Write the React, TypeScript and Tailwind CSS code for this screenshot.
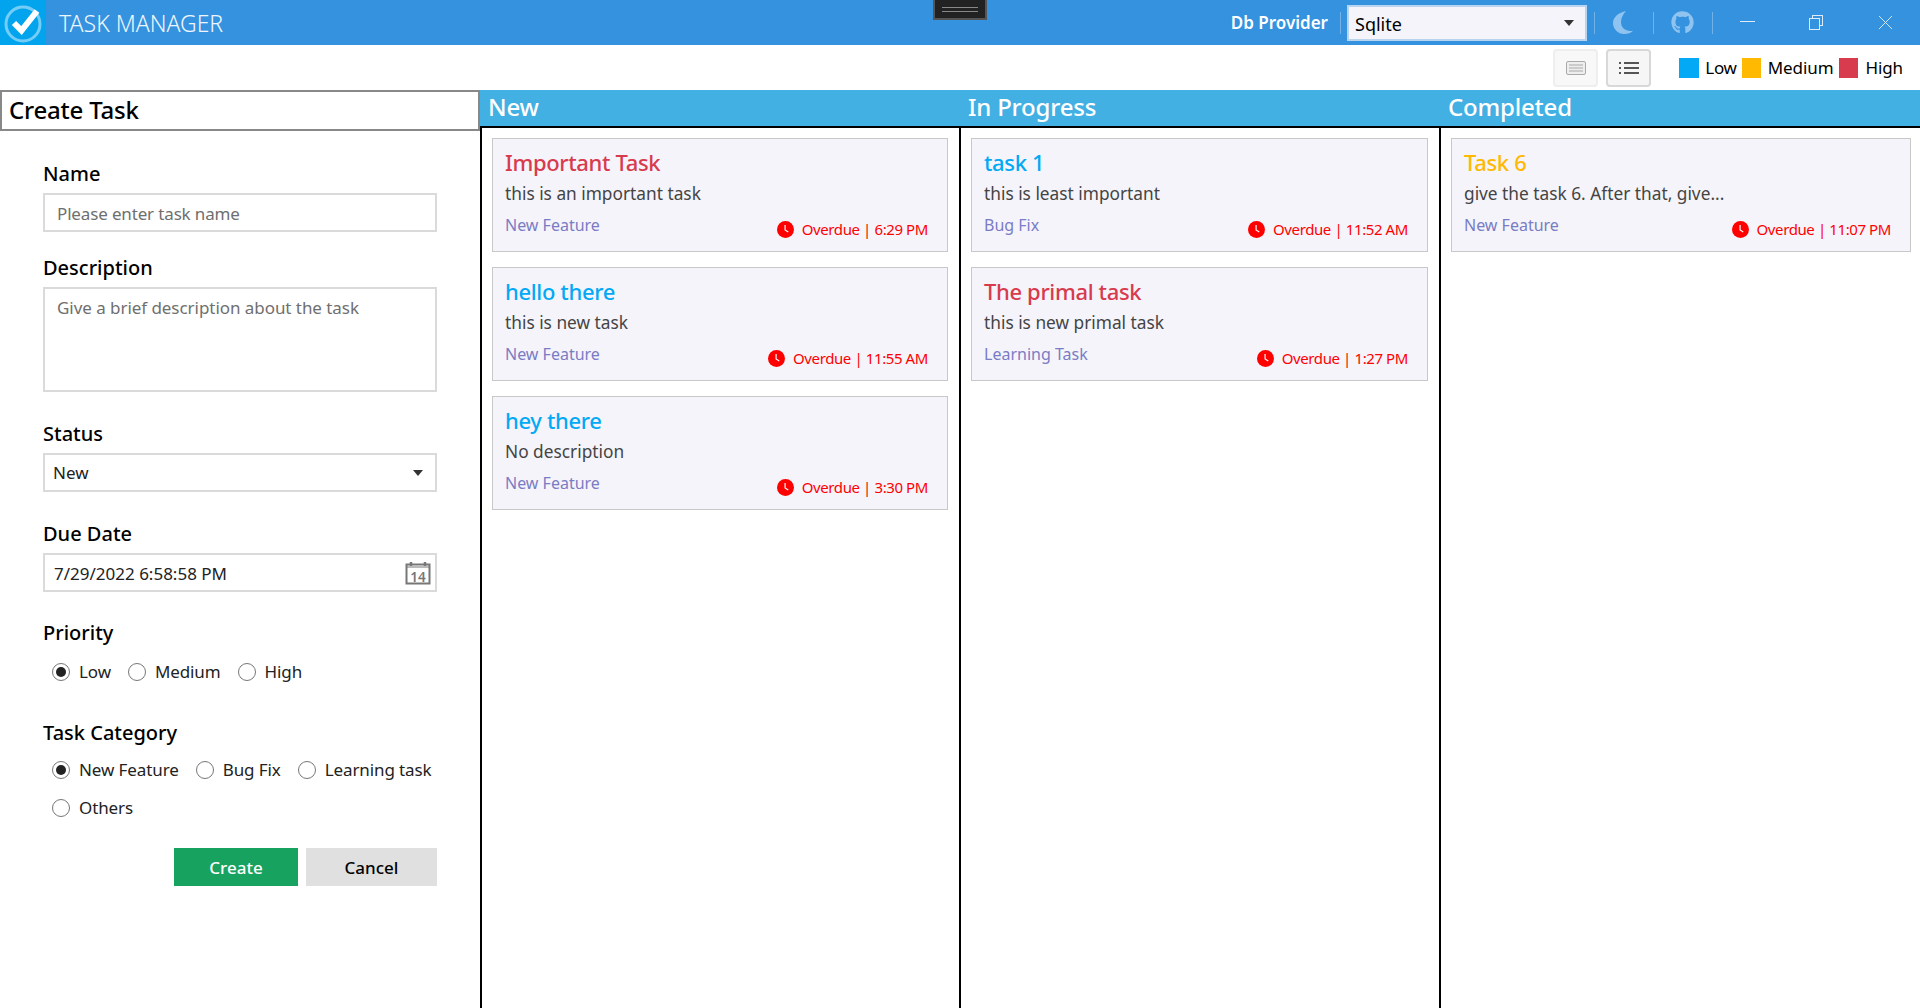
import { FaGithub } from "react-icons/fa";

type Task = {
  title: string;
  description: string;
  category: string;
  time: string;
  color: string;
};

const columns: { name: string; tasks: Task[] }[] = [
  {
    name: "New",
    tasks: [
      { title: "Important Task", description: "this is an important task", category: "New Feature", time: "6:29 PM", color: "text-[#d83a4e]" },
      { title: "hello there", description: "this is new task", category: "New Feature", time: "11:55 AM", color: "text-[#03a9f4]" },
      { title: "hey there", description: "No description", category: "New Feature", time: "3:30 PM", color: "text-[#03a9f4]" },
    ],
  },
  {
    name: "In Progress",
    tasks: [
      { title: "task 1", description: "this is least important", category: "Bug Fix", time: "11:52 AM", color: "text-[#03a9f4]" },
      { title: "The primal task", description: "this is new primal task", category: "Learning Task", time: "1:27 PM", color: "text-[#d83a4e]" },
    ],
  },
  {
    name: "Completed",
    tasks: [
      { title: "Task 6", description: "give the task 6. After that, give...", category: "New Feature", time: "11:07 PM", color: "text-[#ffb900]" },
    ],
  },
];

const Logo = () => (
  <svg viewBox="0 0 46 45" className="h-[45px] w-[46px]">
    <circle cx="23" cy="24" r="17" fill="none" stroke="white" strokeOpacity="0.45" strokeWidth="3" />
    <path d="M14 23l7.5 7.5L37 11" fill="none" stroke="white" strokeWidth="6" />
  </svg>
);

const ClockIcon = () => (
  <svg viewBox="0 0 16 16" className="h-[17px] w-[17px] shrink-0">
    <circle cx="8" cy="8" r="8" fill="#ff0000" />
    <path d="M7.6 3.8v4.6l3 2" fill="none" stroke="white" strokeWidth="1.1" />
  </svg>
);

const Radio = ({ label, checked = false }: { label: string; checked?: boolean }) => (
  <div className="flex items-center gap-[9px]">
    <span className="flex h-[18px] w-[18px] items-center justify-center rounded-full border-[1.5px] border-[#777]">
      {checked && <span className="h-[10px] w-[10px] rounded-full bg-[#222]" />}
    </span>
    <span className="text-[17px] leading-6 tracking-[-0.1px] text-[#222]">{label}</span>
  </div>
);

const Label = ({ text }: { text: string }) => (
  <div className="text-[20px] font-medium leading-[26px] text-black">{text}</div>
);

const TaskCard = ({ task }: { task: Task }) => (
  <div className="h-[114px] border border-[#c8c8c8] bg-[#f5f4fa] pl-3 pr-[19px] pt-[8px]">
    <div className={`text-[22px] font-medium leading-[30px] tracking-[-0.35px] ${task.color}`}>{task.title}</div>
    <div className="mt-[2px] text-[17.3px] leading-[29px] text-[#444]">{task.description}</div>
    <div className="mt-[5px] flex items-start justify-between">
      <span className="text-[16px] leading-[24px] text-[#7a7cc4]">{task.category}</span>
      <span className="mt-1 flex items-center gap-2 text-[15px] leading-[24px] tracking-[-0.4px] text-[#ff0000]">
        <ClockIcon />
        Overdue | {task.time}
      </span>
    </div>
  </div>
);

const CreateForm = () => (
  <div className="w-[480px] shrink-0">
    <div className="flex h-[41px] items-center border-2 border-[#888] pb-[2px] pl-[7px] text-[24px] font-medium tracking-[-0.2px] text-black">
      Create Task
    </div>
    <div className="px-[43px] pt-[30px]">
      <Label text="Name" />
      <div className="mt-[6px] flex h-[39px] items-center border-2 border-[#dadada] px-[12px] pt-[2px] text-[17px] tracking-[-0.15px] text-[#6f6f6f]">
        Please enter task name
      </div>
      <div className="mt-[23px]">
        <Label text="Description" />
      </div>
      <div className="mt-[6px] h-[105px] border-2 border-[#dadada] px-[12px] pt-[7px] text-[17px] leading-6 tracking-[-0.05px] text-[#6f6f6f]">
        Give a brief description about the task
      </div>
      <div className="mt-[29px]">
        <Label text="Status" />
      </div>
      <div className="mt-[6px] flex h-[39px] items-center justify-between border-2 border-[#dadada] pl-[8px] pr-[12px] text-[17px] text-[#222]">
        New
        <span className="h-0 w-0 border-x-[5px] border-t-[6px] border-x-transparent border-t-[#333]" />
      </div>
      <div className="mt-[29px]">
        <Label text="Due Date" />
      </div>
      <div className="mt-[6px] flex h-[39px] items-center justify-between border-2 border-[#dadada] pl-[9px] pr-[4px] text-[17px] text-[#222]">
        <span className="pt-[2px]">7/29/2022 6:58:58 PM</span>
        <svg viewBox="0 0 26 24" className="h-6 w-[26px]">
          <path d="M1.5 3.5h23v19h-23z" fill="none" stroke="#777" strokeWidth="2" />
          <path d="M2 6h22" stroke="#777" strokeWidth="1" />
          <path d="M6 1v4M20 1v4" stroke="#777" strokeWidth="2.5" />
          <text x="13" y="20.5" textAnchor="middle" fontSize="13.5" fontWeight="600" fill="#777" fontFamily="Noto Sans, sans-serif">14</text>
        </svg>
      </div>
      <div className="mt-[28px]">
        <Label text="Priority" />
      </div>
      <div className="mt-[14px] flex gap-[17px] pl-[9px]">
        <Radio label="Low" checked />
        <Radio label="Medium" />
        <Radio label="High" />
      </div>
      <div className="mt-[36px]">
        <Label text="Task Category" />
      </div>
      <div className="mt-[12px] flex flex-wrap gap-x-[17px] gap-y-[14px] pl-[9px]">
        <Radio label="New Feature" checked />
        <Radio label="Bug Fix" />
        <Radio label="Learning task" />
        <Radio label="Others" />
      </div>
      <div className="mt-[28px] flex justify-end gap-2">
        <button className="h-[38px] w-[124px] bg-[#18a25f] pt-[2px] text-[17px] font-medium text-white">Create</button>
        <button className="h-[38px] w-[131px] bg-[#e0e0e0] pt-[2px] text-[17px] font-medium text-black">Cancel</button>
      </div>
    </div>
  </div>
);

export default function App() {
  return (
    <div className="relative flex h-[1008px] w-[1920px] flex-col overflow-hidden bg-white font-['Noto_Sans',sans-serif]">
      {/* title bar */}
      <div className="flex h-[45px] shrink-0 items-center bg-[#3492df] text-white">
        <div className="bg-[#03a4ee]">
          <Logo />
        </div>
        <span className="ml-[13px] pt-[1px] text-[23px] font-light text-[#eef6fd]">TASK MANAGER</span>
        <div className="ml-auto flex items-center">
          <span className="text-[17px] font-semibold">Db Provider</span>
          <span className="ml-[12px] h-[22px] w-[1px] bg-white/30" />
          <div className="ml-[6px] flex h-[36px] w-[240px] items-center justify-between border-2 border-[#b8d4ef] bg-[#f5f4fa] pl-[6px] pr-[11px] text-[18px] text-black">
            <span className="pt-[3px]">Sqlite</span>
            <span className="h-0 w-0 border-x-[5px] border-t-[6px] border-x-transparent border-t-[#333]" />
          </div>
          <span className="ml-[7px] h-[22px] w-[1px] bg-white/30" />
          <svg viewBox="0 0 20 23" className="ml-[18px] h-[23px] w-[20px]" fill="#90c4f0">
            <path d="M13 0C6 1.5 0 6 0 12c0 6 5 11 11 11 4 0 7-1 9-3.2C13 21 8 17 8 11c0-4 2-8 5-11z" />
          </svg>
          <span className="ml-[20px] h-[22px] w-[1px] bg-white/30" />
          <FaGithub size={23} className="ml-[17px] text-[#90c4f0]" />
          <span className="ml-[18px] h-[22px] w-[1px] bg-white/30" />
          <span className="ml-[27px] h-[1px] w-[15px] -translate-y-[1px] bg-[#dcecfa]" />
          <div className="relative ml-[54px] h-[15px] w-[14px]">
            <span className="absolute right-0 top-0 h-[11px] w-[11px] border border-[#dcecfa]" />
            <span className="absolute bottom-0 left-0 h-[12px] w-[11px] border border-[#dcecfa] bg-[#3492df]" />
          </div>
          <svg viewBox="0 0 16 16" className="ml-[55px] mr-[27px] h-[15px] w-[15px]" stroke="#dcecfa" fill="none">
            <path d="M1 1l14 14M15 1L1 15" />
          </svg>
        </div>
      </div>

      {/* debug toolbar */}
      <div className="absolute left-[933px] top-0 flex h-[20px] w-[54px] items-center justify-center border-2 border-t-0 border-[#555] bg-[#222]">
        <span className="h-[5px] w-[36px] border-y border-[#888]" />
      </div>

      {/* view switch and legend */}
      <div className="flex h-[45px] shrink-0 items-center justify-end pr-[17px]">
        <div className="flex h-[38px] w-[45px] items-center justify-center rounded-[4px] border-2 border-[#eee] bg-[#f8f8f8]">
          <svg viewBox="0 0 20 14" className="h-[14px] w-[20px]" fill="none" stroke="#aaa">
            <rect x="0.5" y="0.5" width="19" height="13" rx="1.5" fill="#eee" />
            <path d="M3 4h14M3 7h14M3 10h14" />
          </svg>
        </div>
        <div className="ml-2 flex h-[38px] w-[45px] items-center justify-center rounded-[4px] border-2 border-[#d8d8d8] bg-[#f6f6f6]">
          <svg viewBox="0 0 20 14" className="h-[14px] w-[20px]" stroke="#222" strokeWidth="1.5">
            <path d="M0 2h2M0 7h2M0 12h2M5 2h15M5 7h15M5 12h15" />
          </svg>
        </div>
        <span className="ml-[28px] h-5 w-5 bg-[#03a9f4]" />
        <span className="ml-[6px] text-[17px] tracking-[-0.2px] text-black">Low</span>
        <span className="ml-[5px] h-5 w-[19px] bg-[#ffb900]" />
        <span className="ml-[7px] text-[17px] tracking-[-0.1px] text-black">Medium</span>
        <span className="ml-[6px] h-5 w-[19px] bg-[#d83a4e]" />
        <span className="ml-[7px] text-[17px] tracking-[-0.1px] text-black">High</span>
      </div>

      {/* board */}
      <div className="flex min-h-0 flex-1">
        <CreateForm />
        <div className="flex flex-1 flex-col">
          <div className="grid h-[38px] shrink-0 grid-cols-3 border-b-2 border-black bg-[#42b0e2]">
            {columns.map((column) => (
              <div key={column.name} className="pl-2 text-[24px] font-medium leading-[33px] tracking-[-0.2px] text-white">
                {column.name}
              </div>
            ))}
          </div>
          <div className="grid flex-1 grid-cols-[479px_480px_481px]">
            {columns.map((column, i) => (
              <div
                key={column.name}
                className={`flex flex-col gap-[15px] border-l-2 border-black pl-[10px] pt-[10px] ${i === 2 ? "pr-[9px]" : "pr-[11px]"}`}
              >
                {column.tasks.map((task) => (
                  <TaskCard key={task.title} task={task} />
                ))}
              </div>
            ))}
          </div>
        </div>
      </div>
    </div>
  );
}
